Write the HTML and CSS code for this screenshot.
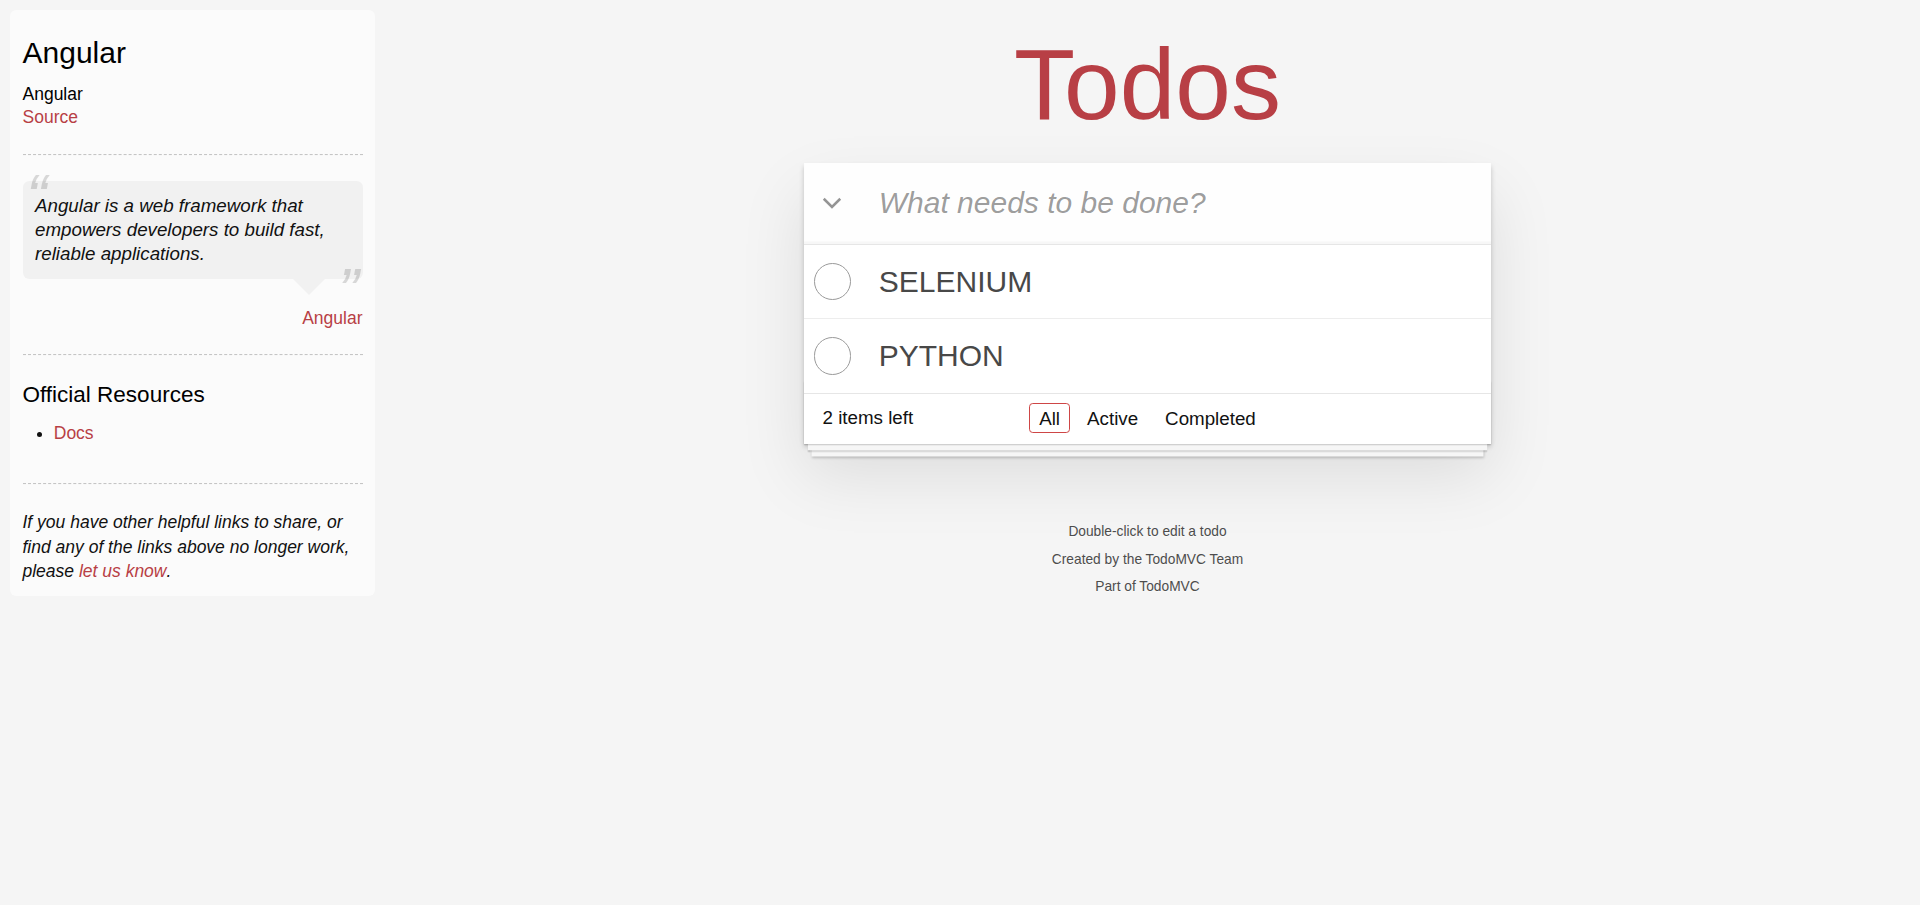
FILE: index.html
```html
<!doctype html>
<html lang="en">
<head>
<meta charset="utf-8">
<title>Angular • TodoMVC</title>
<link rel="stylesheet" href="styles.css">
</head>
<body>
<div class="page">
  <aside class="learn">
    <header class="learn-header">
      <h3 class="learn-title">Angular</h3>
      <div class="source-links">
        <h5 class="source-name">Angular</h5>
        <a class="link" href="#">Source</a>
      </div>
    </header>
    <hr class="rule">
    <blockquote class="quote">
      <div class="speech-bubble">
        <p class="quote-text">Angular is a web framework that empowers developers to build fast, reliable applications.</p>
      </div>
      <footer class="quote-footer"><a class="link quote-link" href="#">Angular</a></footer>
    </blockquote>
    <hr class="rule">
    <h4 class="resources-title">Official Resources</h4>
    <ul class="resources">
      <li class="resource"><a class="link" href="#">Docs</a></li>
    </ul>
    <footer class="learn-footer">
      <hr class="rule">
      <em class="learn-note">If you have other helpful links to share, or find any of the links above no longer work, please <a class="link" href="#">let us know</a>.</em>
    </footer>
  </aside>

  <main class="main-area">
    <div class="app-col">
      <h1 class="app-title">Todos</h1>
      <section class="todoapp">
        <header class="new-row">
          <label class="toggle-all" for="new-todo">
            <svg class="toggle-all-icon" viewBox="0 0 16 10" aria-hidden="true"><path d="M1.4 1.4 L8 8 L14.6 1.4" fill="none" stroke="#949494" stroke-width="2"/></svg>
          </label>
          <input id="new-todo" class="new-todo" placeholder="What needs to be done?">
        </header>
        <ul class="todo-list">
          <li class="todo"><span class="toggle"></span><label class="todo-label">SELENIUM</label></li>
          <li class="todo"><span class="toggle"></span><label class="todo-label">PYTHON</label></li>
        </ul>
        <footer class="footer">
          <span class="todo-count"><strong class="count-num">2</strong> items left</span>
          <ul class="filters"><li class="filter"><a class="filter-link selected" href="#">All</a></li><li class="filter"><a class="filter-link" href="#">Active</a></li><li class="filter"><a class="filter-link" href="#">Completed</a></li></ul>
        </footer>
      </section>
      <footer class="info">
        <p class="info-line">Double-click to edit a todo</p>
        <p class="info-line">Created by the TodoMVC Team</p>
        <p class="info-line">Part of TodoMVC</p>
      </footer>
    </div>
  </main>
</div>
</body>
</html>
```

FILE: styles.css
```css
html {
  zoom: 1.25;
}

body {
  margin: 0;
  padding: 0;
  background: #f5f5f5;
  color: #111111;
  font-family: "Liberation Sans", Arial, Helvetica, sans-serif;
  font-size: 14px;
  line-height: 19.6px;
  font-weight: 300;
}

.page {
  display: flex;
  align-items: flex-start;
}

/* ---------- Sidebar ---------- */
.learn {
  flex: 0 0 272px;
  width: 272px;
  margin: 8px 0 0 8px;
  padding: 10px;
  border-radius: 5px;
  background-color: rgba(255, 255, 255, 0.6);
}

.link {
  color: #b83f45;
  text-decoration: none;
  font-weight: normal;
}

.learn-title {
  margin: 10px 0;
  font-size: 24px;
  font-weight: normal;
  line-height: 1.2;
  color: #000;
}

.source-name {
  margin: 10px 0 0;
  font-size: 14px;
  font-weight: normal;
  line-height: 1.2;
  color: #000;
}

.rule {
  margin: 20px 0;
  height: 0;
  border: 0;
  border-top: 1px dashed #c5c5c5;
  border-bottom: 1px dashed #f7f7f7;
}

.quote {
  margin: 20px 0;
}

.speech-bubble {
  position: relative;
  padding: 10px;
  background: rgba(0, 0, 0, 0.04);
  border-radius: 5px;
}

.speech-bubble::after {
  content: '';
  position: absolute;
  top: 100%;
  right: 30px;
  border: 13px solid transparent;
  border-top-color: rgba(0, 0, 0, 0.04);
}

.quote-text {
  margin: 0;
  font-size: 15px;
  font-weight: 300;
  line-height: 1.3;
  font-style: italic;
}

.quote-text::before {
  content: '\201C';
  font-size: 50px;
  opacity: 0.15;
  position: absolute;
  top: -20px;
  left: 3px;
}

.quote-text::after {
  content: '\201D';
  font-size: 50px;
  opacity: 0.15;
  position: absolute;
  bottom: -42px;
  right: 3px;
}

.quote-footer {
  margin-top: 20.4px;
  height: 19.6px;
  text-align: right;
}

.quote-link {
  margin-left: 5px;
  vertical-align: middle;
}

.resources-title {
  margin: 10px 0;
  font-size: 18px;
  font-weight: normal;
  line-height: 1.2;
  color: #000;
}

.resources {
  padding: 0;
  margin: 0 0 30px 25px;
}

.resource {
  line-height: 20px;
}

.learn-note {
  font-style: italic;
}

/* ---------- Main ---------- */
.main-area {
  flex: 1;
  min-width: 0;
}

.app-col {
  max-width: 550px;
  margin: 0 auto;
}

.app-title {
  margin: 0;
  padding-top: 27px;
  height: 103px;
  font-size: 80px;
  line-height: 80px;
  font-weight: normal;
  text-align: center;
  color: #b83f45;
}

.todoapp {
  position: relative;
  background: #fff;
  margin-bottom: 40px;
  box-shadow: 0 2px 4px 0 rgba(0, 0, 0, 0.2), 0 25px 50px 0 rgba(0, 0, 0, 0.1);
}

.new-row {
  display: flex;
  height: 65px;
  background: rgba(0, 0, 0, 0.003);
  box-shadow: inset 0 -2px 1px rgba(0, 0, 0, 0.03);
}

.toggle-all {
  flex: 0 0 45px;
  display: flex;
  align-items: center;
  justify-content: center;
}

.toggle-all-icon {
  width: 16px;
  height: 10px;
  display: block;
}

.new-todo {
  flex: 1;
  min-width: 0;
  height: 65px;
  margin: 0;
  padding: 16px 16px 16px 15px;
  box-sizing: border-box;
  border: none;
  outline: none;
  background: transparent;
  font-family: inherit;
  font-size: 24px;
  font-weight: 300;
  line-height: 33.6px;
  color: #111;
}

.new-todo::placeholder {
  font-style: italic;
  font-weight: 400;
  color: rgba(0, 0, 0, 0.4);
}

.todo-list {
  list-style: none;
  margin: 0;
  padding: 0;
  border-top: 1px solid #e6e6e6;
}

.todo {
  display: flex;
  align-items: center;
  font-size: 24px;
  border-bottom: 1px solid #ededed;
}

.todo:last-child {
  border-bottom: none;
}

.toggle {
  flex: 0 0 auto;
  width: 30px;
  height: 30px;
  margin-left: 8px;
  box-sizing: border-box;
  border: 1px solid #9a9a9a;
  border-radius: 50%;
}

.todo-label {
  flex: 1;
  padding: 15px 15px 15px 22px;
  line-height: 1.2;
  font-weight: 400;
  color: #484848;
  word-break: break-all;
}

.footer {
  position: relative;
  display: grid;
  grid-template-columns: 1fr auto 1fr;
  align-items: start;
  height: 20px;
  padding: 10px 15px;
  font-size: 15px;
  border-top: 1px solid #e6e6e6;
}

.footer::before {
  content: '';
  position: absolute;
  right: 0;
  bottom: 0;
  left: 0;
  height: 50px;
  overflow: hidden;
  pointer-events: none;
  box-shadow: 0 1px 1px rgba(0, 0, 0, 0.2),
    0 8px 0 -3px #f6f6f6,
    0 9px 1px -3px rgba(0, 0, 0, 0.2),
    0 16px 0 -6px #f6f6f6,
    0 17px 2px -6px rgba(0, 0, 0, 0.2);
}

.todo-count {
  grid-column: 1;
  text-align: left;
}

.count-num {
  font-weight: 300;
}

.filters {
  grid-column: 2;
  margin: 0;
  padding: 0;
  list-style: none;
  white-space: nowrap;
}

.filter {
  display: inline;
}

.filter-link {
  color: inherit;
  margin: 3px;
  padding: 3px 7px;
  text-decoration: none;
  border: 1px solid transparent;
  border-radius: 3px;
}

.filter-link.selected {
  border-color: #ce4646;
}

.info {
  margin: 65px auto 0;
  color: #4d4d4d;
  font-size: 11px;
  text-shadow: 0 1px 0 rgba(255, 255, 255, 0.5);
  text-align: center;
}

.info-line {
  margin: 11px 0;
  line-height: 1;
}
```
